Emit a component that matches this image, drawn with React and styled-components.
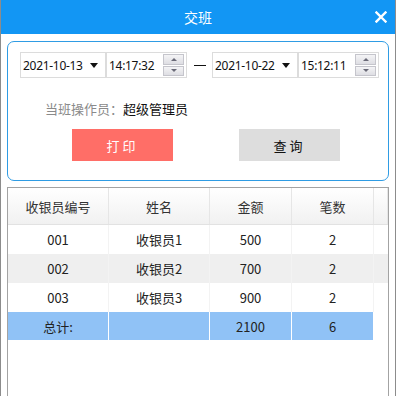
import React from "react";
import styled, { createGlobalStyle } from "styled-components";

const Global = createGlobalStyle`
  html, body { margin: 0; padding: 0; background: #fff; }
  body { font-family: "Noto Sans CJK SC", "Noto Sans", sans-serif; }
  * { box-sizing: border-box; }
`;

const Window = styled.div`
  width: 396px;
  height: 396px;
  border-left: 1px solid #8c8c8c;
  border-right: 1px solid #8c8c8c;
  display: flex;
  flex-direction: column;
  overflow: hidden;
  background: #fff;
`;

const TitleBar = styled.div`
  height: 34px;
  flex: none;
  background: #1296f4;
  display: grid;
  grid-template-columns: 1fr auto 1fr;
  align-items: center;
  color: #fff;
  margin: 0 -1px;
`;

const Title = styled.div`
  grid-column: 2;
  font-size: 14px;
  line-height: 1;
`;

const Close = styled.div`
  grid-column: 3;
  justify-self: end;
  margin-right: 9px;
  width: 12px;
  height: 12px;
  display: flex;
`;

const Body = styled.div`
  flex: 1;
  padding: 7px 6px 0 6px;
  display: flex;
  flex-direction: column;
  gap: 6px;
`;

const Panel = styled.div`
  height: 140px;
  border: 1px solid #2f9ce4;
  border-radius: 7px;
  padding: 10px 0 0 12px;
  display: flex;
  flex-direction: column;
`;

const InputRow = styled.div`
  display: flex;
  align-items: center;
  height: 26px;
`;

const Field = styled.div`
  height: 26px;
  border: 1px solid #dcdcdc;
  display: flex;
  align-items: center;
  font-family: "Noto Sans", "Noto Sans CJK SC", sans-serif;
  font-size: 12px;
  color: #111;
  width: ${(p) => p.w}px;
  padding-left: 2px;
  padding-right: 2px;
  letter-spacing: -0.3px;
`;

const FieldText = styled.span`
  flex: 1;
`;

const Caret = styled.span`
  width: 0;
  height: 0;
  border-left: 4px solid transparent;
  border-right: 4px solid transparent;
  border-top: 5px solid #111;
  margin-right: 5px;
`;

const Spinner = styled.div`
  width: 21px;
  height: 22px;
  display: flex;
  flex-direction: column;
  gap: 1px;
`;

const SpinBtn = styled.div`
  flex: 1;
  border: 1px solid #c5c5cc;
  background: linear-gradient(#f4f4f6, #dedee3);
  display: flex;
  align-items: center;
  justify-content: center;
`;

const Arrow = styled.span`
  width: 0;
  height: 0;
  border-left: 3px solid transparent;
  border-right: 3px solid transparent;
  ${(p) => (p.$up ? "border-bottom: 3px solid #6a6a78;" : "border-top: 3px solid #6a6a78;")}
`;

const Dash = styled.div`
  width: 25px;
  display: flex;
  justify-content: center;
`;

const DashLine = styled.span`
  width: 12px;
  height: 1px;
  background: #111;
`;

const Operator = styled.div`
  margin-top: 20px;
  padding-left: 25px;
  font-size: 13px;
  height: 20px;
  display: flex;
  align-items: center;
`;

const OpLabel = styled.span`
  color: #8a8a8a;
`;

const OpName = styled.span`
  color: #111;
`;

const ButtonRow = styled.div`
  margin-top: 11px;
  display: flex;
  padding-left: 52px;
  gap: 66px;
`;

const Button = styled.div`
  width: 101px;
  height: 32px;
  display: flex;
  align-items: center;
  justify-content: center;
  font-size: 13px;
  letter-spacing: 3px;
  background: ${(p) => (p.$primary ? "#ff6e67" : "#dddddd")};
  color: ${(p) => (p.$primary ? "#fff" : "#111")};
`;

const Table = styled.div`
  flex: 1;
  border: 1px solid #a3a3a3;
  border-bottom: none;
  display: flex;
  flex-direction: column;
`;

const Row = styled.div`
  display: grid;
  grid-template-columns: 101px 101px 82px 82px 1fr;
  height: ${(p) => p.$h}px;
  background: ${(p) => p.$bg || "#fff"};
`;

const Header = styled(Row)`
  background: linear-gradient(#ffffff, #f1f1f1);
  border-bottom: 1px solid #e2e2e2;
`;

const Cell = styled.div`
  display: flex;
  align-items: center;
  justify-content: center;
  font-size: 13px;
  color: ${(p) => (p.$head ? "#333" : "#222")};
  border-right: 1px solid ${(p) => p.$line};
  background: ${(p) => p.$bg || "transparent"};
`;

const XIcon = () => (
  <svg width="12" height="12" viewBox="0 0 12 12">
    <path d="M1.5 1.5 L10.5 10.5 M10.5 1.5 L1.5 10.5" stroke="#fff" strokeWidth="2.4" strokeLinecap="square" />
  </svg>
);

const rows = [
  ["001", "收银员1", "500", "2"],
  ["002", "收银员2", "700", "2"],
  ["003", "收银员3", "900", "2"],
];

const DateTime = ({ date, time }) => (
  <>
    <Field w={86}>
      <FieldText>{date}</FieldText>
      <Caret />
    </Field>
    <Field w={81}>
      <FieldText>{time}</FieldText>
      <Spinner>
        <SpinBtn>
          <Arrow $up />
        </SpinBtn>
        <SpinBtn>
          <Arrow />
        </SpinBtn>
      </Spinner>
    </Field>
  </>
);

export default function App() {
  return (
    <>
      <Global />
      <Window>
        <TitleBar>
          <Title>交班</Title>
          <Close>
            <XIcon />
          </Close>
        </TitleBar>
        <Body>
          <Panel>
            <InputRow>
              <DateTime date="2021-10-13" time="14:17:32" />
              <Dash>
                <DashLine />
              </Dash>
              <DateTime date="2021-10-22" time="15:12:11" />
            </InputRow>
            <Operator>
              <OpLabel>当班操作员：</OpLabel>
              <OpName>超级管理员</OpName>
            </Operator>
            <ButtonRow>
              <Button $primary>打印</Button>
              <Button>查询</Button>
            </ButtonRow>
          </Panel>
          <Table>
            <Header $h={37}>
              {["收银员编号", "姓名", "金额", "笔数", ""].map((t, i) => (
                <Cell key={i} $head $line="#e6e6e6">
                  {t}
                </Cell>
              ))}
            </Header>
            {rows.map((r, i) => (
              <Row key={i} $h={29} $bg={i === 1 ? "#efefef" : "#fff"}>
                {r.map((t, j) => (
                  <Cell key={j} $line="#f3f3f3">
                    {t}
                  </Cell>
                ))}
              </Row>
            ))}
            <Row $h={28}>
              {["总计:", "", "2100", "6"].map((t, j) => (
                <Cell key={j} $line="#fff" $bg="#90c2f6">
                  {t}
                </Cell>
              ))}
            </Row>
          </Table>
        </Body>
      </Window>
    </>
  );
}
